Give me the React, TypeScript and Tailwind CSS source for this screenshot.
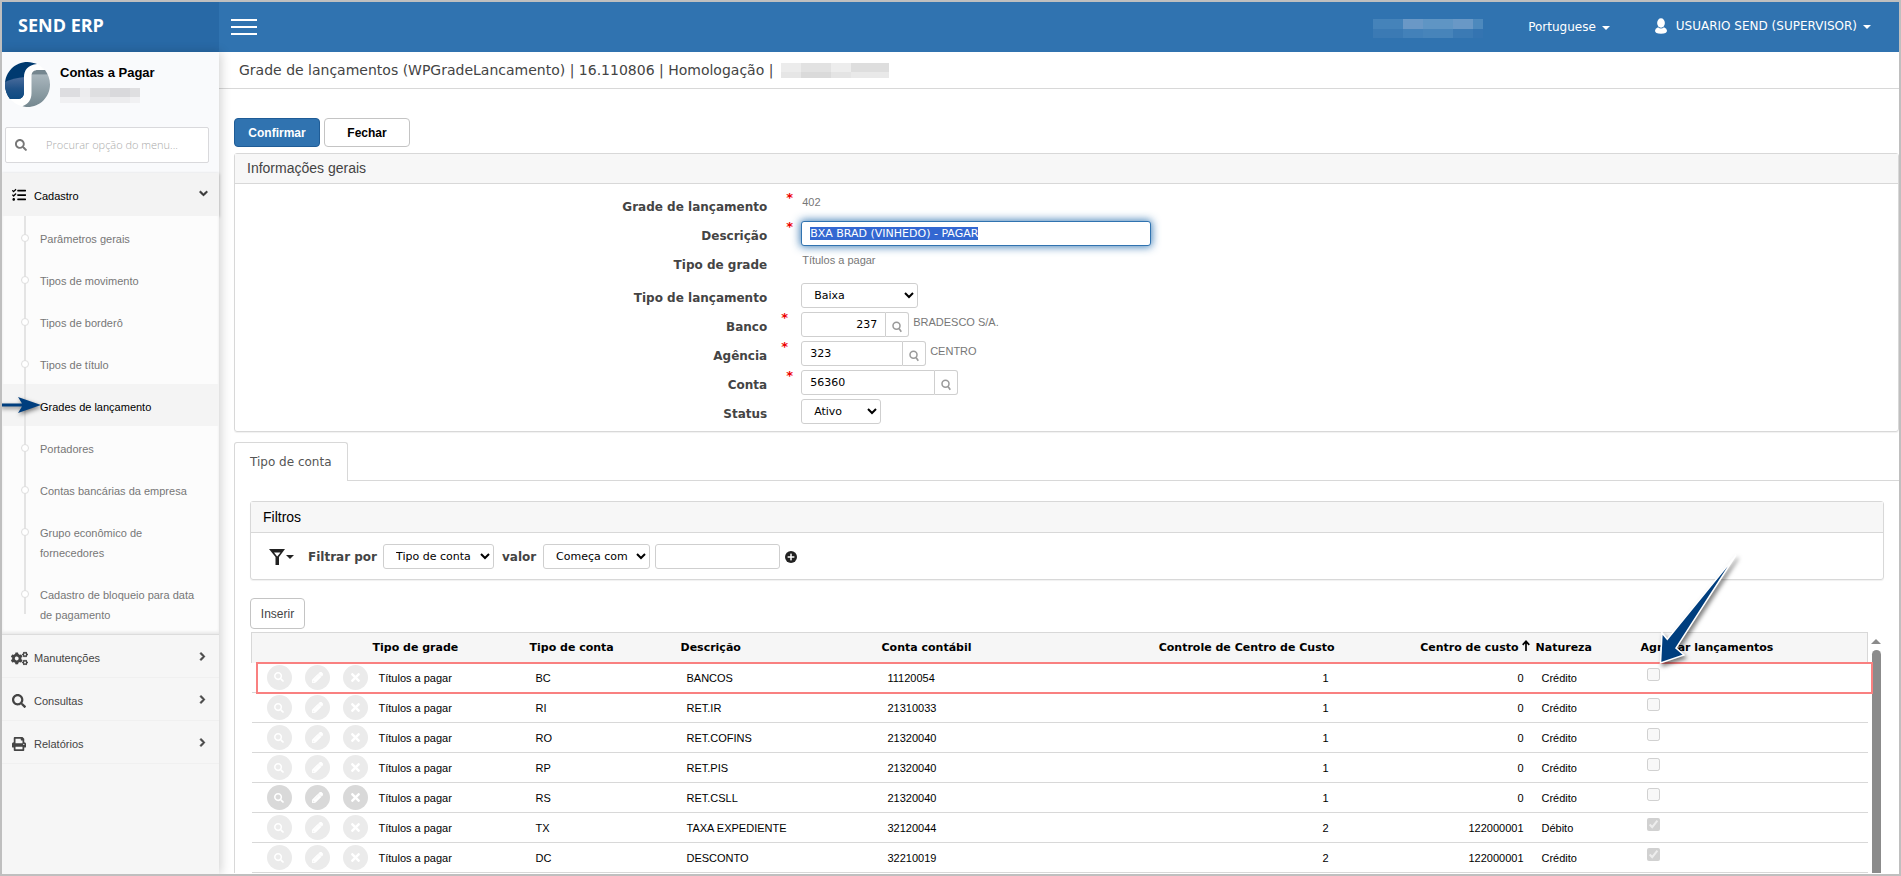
import { FaSearch, FaTasks, FaCogs, FaPrint, FaChevronDown, FaChevronRight, FaPlus, FaTimes, FaPencilAlt } from "react-icons/fa";
import type { ReactNode } from "react";

const VERDANA = "font-['Verdana','DejaVu_Sans',sans-serif]";
const ARIAL = "font-['Liberation_Sans',Arial,sans-serif]";

const submenu = [
  "Parâmetros gerais",
  "Tipos de movimento",
  "Tipos de borderô",
  "Tipos de título",
  "Grades de lançamento",
  "Portadores",
  "Contas bancárias da empresa",
  "Grupo econômico de fornecedores",
  "Cadastro de bloqueio para data de pagamento",
];

type Entry = {
  tipo: string;
  descricao: string;
  conta: string;
  controle: number;
  centro: string;
  natureza: string;
  agregar: boolean;
  enabled?: boolean;
};

const entries: Entry[] = [
  { tipo: "BC", descricao: "BANCOS", conta: "11120054", controle: 1, centro: "0", natureza: "Crédito", agregar: false },
  { tipo: "RI", descricao: "RET.IR", conta: "21310033", controle: 1, centro: "0", natureza: "Crédito", agregar: false },
  { tipo: "RO", descricao: "RET.COFINS", conta: "21320040", controle: 1, centro: "0", natureza: "Crédito", agregar: false },
  { tipo: "RP", descricao: "RET.PIS", conta: "21320040", controle: 1, centro: "0", natureza: "Crédito", agregar: false },
  { tipo: "RS", descricao: "RET.CSLL", conta: "21320040", controle: 1, centro: "0", natureza: "Crédito", agregar: false, enabled: true },
  { tipo: "TX", descricao: "TAXA EXPEDIENTE", conta: "32120044", controle: 2, centro: "122000001", natureza: "Débito", agregar: true },
  { tipo: "DC", descricao: "DESCONTO", conta: "32210019", controle: 2, centro: "122000001", natureza: "Crédito", agregar: true },
];

function Caret({ className }: { className: string }) {
  return (
    <svg viewBox="0 0 8 4" className={`h-1 w-2 ${className}`} aria-hidden="true">
      <path d="M0 0h8L4 4z" fill="currentColor" />
    </svg>
  );
}

function Logo() {
  return (
    <svg viewBox="0 0 45 45" className="size-[45px] shrink-0" aria-hidden="true">
      <defs>
        <linearGradient id="logo-blue" x1="0" y1="0" x2="0" y2="1">
          <stop offset="0" stopColor="#4a6c9c" />
          <stop offset="0.4" stopColor="#1f5288" />
          <stop offset="1" stopColor="#00457e" />
        </linearGradient>
        <linearGradient id="logo-gray" x1="0" y1="0" x2="0" y2="1">
          <stop offset="0" stopColor="#75868f" />
          <stop offset="0.11" stopColor="#75868f" />
          <stop offset="0.13" stopColor="#a9b6bd" />
          <stop offset="1" stopColor="#74878f" />
        </linearGradient>
        <clipPath id="logo-left">
          <path d="M32 2C29 1 26 0 22.500 0C10 0 0 10 0 22.500C0 28.500 2 33 5 37H13C17 37 19 34 19 30V15C19 8 23 3 32 2Z" />
        </clipPath>
      </defs>
      <circle cx="22.500" cy="22.500" r="22.500" fill="#fff" />
      <g clipPath="url(#logo-left)">
        <rect width="45" height="45" fill="#003a70" />
        <path d="M0 20Q8 16 20 15V45H0Z" fill="url(#logo-blue)" />
      </g>
      <path d="M26.500 14C26.500 10 29 8 33 8H40C43 12 45 17 45 22.500C45 35 35 45 22.500 45C20.500 45 19 44.800 17.500 44.300C23 42 26.500 38 26.500 31Z" fill="url(#logo-gray)" />
    </svg>
  );
}

function SidebarLink({ icon, label }: { icon: ReactNode; label: string }) {
  return (
    <li className="border-b border-[#f0f0f0]">
      <a href="#" className="flex h-[42px] items-center pt-1 pr-[12px] pl-[9px] text-[11px] text-[#444]">
        <span className="flex w-[23px] justify-start">{icon}</span>
        <span className="flex-1">{label}</span>
        <FaChevronRight className="mb-1 size-[9px] stroke-[50px]" />
      </a>
    </li>
  );
}

function Sidebar() {
  return (
    <aside className={`relative z-10 flex w-[217px] shrink-0 flex-col bg-[#f6f6f6] shadow-[2px_0_10px_rgba(0,0,0,0.18)] ${ARIAL}`}>
      <div className="bg-[#f9fafc] pb-[10px] pl-[3px]">
        <div className="flex gap-[10px] pt-[10px]">
          <Logo />
          <div className="pt-[3px]">
            <p className="text-[13px] leading-4 font-bold text-black">Contas a Pagar</p>
            <div className="mt-[7px] grid w-20 grid-cols-[20px_10px_20px_20px_10px]">
              <i className="h-[9px] bg-[#dddde0]" /><i className="bg-[#ececee]" /><i className="bg-[#dfdfe1]" /><i className="bg-[#d9d9dc]" /><i className="bg-[#dfdfe1]" />
              <i className="h-1.5 bg-[#f0f0f2]" /><i className="bg-[#eeeef0]" /><i className="bg-[#e9e9eb]" /><i className="bg-[#ececee]" /><i className="bg-[#f1f1f3]" />
            </div>
          </div>
        </div>
        <label className="mt-5 flex h-9 w-[204px] items-center rounded-xs border border-[#d9d9dc] bg-white pl-[9px]">
          <FaSearch className="size-3 text-[#777]" />
          <input
            type="text"
            aria-label="Procurar opção do menu"
            placeholder="Procurar opção do menu..."
            className="ml-[19px] w-[150px] bg-transparent font-['Open_Sans',sans-serif] text-[11px] font-light outline-none placeholder:text-[#aaa]"
          />
        </label>
      </div>
      <nav>
        <a href="#" className="relative flex h-[43px] items-center bg-[#f3f3f3] pt-px pr-[11px] pl-[10px] text-[11px] text-black shadow-[0_1px_3px_rgba(0,0,0,0.25)]">
          <FaTasks className="mr-2 size-[14px]" />
          <span className="flex-1 pt-[3px]">Cadastro</span>
          <FaChevronDown className="mb-1 size-[9px] stroke-[50px] text-[#333]" />
        </a>
        <div className="relative border-b border-[#dcdcdc] bg-[#fcfcfc] shadow-[inset_0_-2px_3px_rgba(0,0,0,0.08)]">
          <ul>
            {submenu.map((label, i) => (
              <li key={label} className={`relative ${i === 4 ? "bg-[#f4f4f4]" : ""}`}>
                <span className={`absolute left-[22px] w-0.5 bg-[#e4e4e4] ${i === 8 ? "top-0 h-[42px]" : "inset-y-0"}`} />
                {i !== 4 && <span className="absolute top-[18px] left-[19px] size-2 rounded-full border border-[#dedede] bg-white" />}
                <a href="#" className={`block pt-[13px] pr-5 pb-[9px] pl-[38px] text-[11px] leading-5 ${i === 4 ? "text-black" : "text-[#777]"}`}>
                  {label}
                </a>
                {i === 4 && (
                  <svg viewBox="0 0 42 24" className="absolute top-[9px] -left-0.5 h-6 w-[42px] drop-shadow-[1px_2px_2px_rgba(0,0,0,0.5)]" aria-hidden="true">
                    <path d="M0 10.500H22L18 4L41 12L18 20L22 13.500H0Z" fill="#003e7e" />
                  </svg>
                )}
              </li>
            ))}
          </ul>
        </div>
        <ul>
          <SidebarLink icon={<FaCogs className="size-[17px]" />} label="Manutenções" />
          <SidebarLink icon={<FaSearch className="ml-px size-[14px]" />} label="Consultas" />
          <SidebarLink icon={<FaPrint className="ml-px size-[14px]" />} label="Relatórios" />
        </ul>
      </nav>
    </aside>
  );
}

function TopBar() {
  return (
    <header className={`flex h-[50px] shrink-0 bg-[#3073b0] text-white ${VERDANA}`}>
      <div className="flex w-[217px] items-center bg-[#2869a6] pb-1 pl-4 font-['Open_Sans',sans-serif] text-lg font-bold">SEND ERP</div>
      <button type="button" aria-label="Menu" className="ml-3 flex w-[26px] flex-col justify-center gap-[5px]">
        <span className="h-0.5 w-full bg-white" />
        <span className="h-0.5 w-full bg-white" />
        <span className="h-0.5 w-full bg-white" />
      </button>
      <div className="ml-auto flex items-center pr-7 pb-0.5 text-xs">
        <div className="mr-[45px] grid grid-cols-[30px_20px_30px_20px_10px] pt-1">
          <i className="h-[10px] bg-[#4583ba]" /><i className="bg-[#6a98c6]" /><i className="bg-[#5f95c4]" /><i className="bg-[#6998c6]" /><i className="bg-[#4d89bd]" />
          <i className="h-[9px] bg-[#3b7ab4]" /><i className="bg-[#4381b9]" /><i className="bg-[#4784ba]" /><i className="bg-[#3b7ab4]" /><i className="bg-[#3474b1]" />
        </div>
        <a href="#" className="flex items-center gap-1.5 pt-0.5">Portuguese <Caret className="mt-0.5 text-white" /></a>
        <a href="#" className="ml-[45px] flex items-center gap-[9px]">
          <svg viewBox="0 0 14 18" className="h-4 w-3" aria-hidden="true">
            <ellipse cx="7" cy="5.500" rx="4.500" ry="5.500" fill="#fff" />
            <path d="M3.500 10.500Q0 12 0 14.500Q0 18 7 18Q14 18 14 14.500Q14 12 10.500 10.500Q7 13.500 3.500 10.500Z" fill="#fff" />
          </svg>
          <span className="flex items-center gap-1.5">USUARIO SEND (SUPERVISOR) <Caret className="mt-0.5 text-white" /></span>
        </a>
      </div>
    </header>
  );
}

const box = "h-[25px] rounded-[3px] border border-[#cfcfcf] bg-white text-[11px] text-black";

function Field({ label, id, required, near, tall, children }: { label: string; id: string; required?: boolean; near?: boolean; tall?: boolean; children: ReactNode }) {
  return (
    <div className={`flex ${tall ? "h-[33px]" : "h-[29px]"}`}>
      <label htmlFor={id} className="w-[32%] pt-[5px] text-right text-xs leading-5 font-bold text-[#444]">{label}</label>
      <span className={`w-[34px] text-right text-[13px] leading-3 font-bold text-[#e00] ${near ? "pr-[13px]" : "pr-2"}`}>{required ? "*" : ""}</span>
      <div className="flex items-start">{children}</div>
    </div>
  );
}

function Lookup({ id, value, width, right, text }: { id: string; value: string; width: string; right?: boolean; text?: string }) {
  return (
    <>
      <input id={id} defaultValue={value} className={`${box} ${width} rounded-r-none px-2 ${right ? "text-right" : ""}`} />
      <button type="button" aria-label="Pesquisar" className="flex h-[25px] w-[23px] items-center justify-center rounded-r-[3px] border border-l-0 border-[#cfcfcf] bg-white pt-1 text-[#999]">
        <svg viewBox="0 0 10 12" className="h-3 w-2.5" fill="none" stroke="currentColor" aria-hidden="true">
          <circle cx="4.500" cy="4.800" r="3.500" strokeWidth="1.500" />
          <path d="M7 7.500L9.300 10.800" strokeWidth="1.600" />
        </svg>
      </button>
      {text && <span className={`pt-[3px] pl-1 text-[11px] leading-[14px] text-[#777] ${ARIAL}`}>{text}</span>}
    </>
  );
}

function GeneralInfo() {
  const readOnly = `pl-px pt-[3px] text-[11px] leading-[14px] text-[#777] ${ARIAL}`;
  return (
    <section className="mt-1.5 rounded-[3px] border border-[#d8d8d8] pb-[3px] shadow-[0_1px_1px_rgba(0,0,0,0.06)]">
      <h2 className={`border-b border-[#d8d8d8] bg-[#f7f7f7] py-1 pl-3 text-sm leading-[21px] text-[#444] ${ARIAL}`}>Informações gerais</h2>
      <form className="pt-2">
        <Field label="Grade de lançamento" id="grade" required><output id="grade" className={readOnly}>402</output></Field>
        <Field label="Descrição" id="descricao" required>
          <input
            id="descricao"
            defaultValue="BXA BRAD (VINHEDO) - PAGAR"
            autoFocus
            onFocus={(e) => e.currentTarget.select()}
            className="h-[25px] w-[350px] rounded-[3px] border border-[#3073b0] bg-white px-2 text-[11px] text-black shadow-[0_0_8px_1px_rgba(48,115,176,0.9)] outline-none selection:bg-[#3367d1] selection:text-white"
          />
        </Field>
        <Field label="Tipo de grade" id="tipo-grade" tall><output id="tipo-grade" className={readOnly}>Títulos a pagar</output></Field>
        <Field label="Tipo de lançamento" id="tipo-lancamento">
          <select id="tipo-lancamento" className={`${box} w-[117px] pl-2`}><option>Baixa</option></select>
        </Field>
        <Field label="Banco" id="banco" required near><Lookup id="banco" value="237" width="w-[85px]" right text="BRADESCO S/A." /></Field>
        <Field label="Agência" id="agencia" required near><Lookup id="agencia" value="323" width="w-[102px]" text="CENTRO" /></Field>
        <Field label="Conta" id="conta" required><Lookup id="conta" value="56360" width="w-[134px]" /></Field>
        <Field label="Status" id="status">
          <select id="status" className={`${box} w-20 pl-2`}><option>Ativo</option></select>
        </Field>
      </form>
    </section>
  );
}

function Filters() {
  return (
    <section className="mr-[15px] rounded-[3px] border border-[#d8d8d8] shadow-[0_1px_1px_rgba(0,0,0,0.06)]">
      <h2 className={`border-b border-[#d8d8d8] bg-[#f7f7f7] py-1 pl-3 text-sm leading-[22px] text-black ${ARIAL}`}>Filtros</h2>
      <form className="flex h-[46px] items-center pt-px pl-[18px] text-xs text-[#444]">
        <button type="button" aria-label="Filtros salvos" className="flex items-center text-[#222]">
          <svg viewBox="0 0 16 16" className="size-4" aria-hidden="true">
            <path fillRule="evenodd" d="M0 0H16L10 8V16H6.500V8ZM5 3.500L8.200 7.500L11.500 3.500Z" fill="currentColor" />
          </svg>
          <Caret className="ml-px" />
        </button>
        <label htmlFor="campo" className="ml-[14px] w-[75px] font-bold whitespace-nowrap">Filtrar por</label>
        <select id="campo" className={`${box} w-[111px] pl-2`}><option>Tipo de conta</option></select>
        <label htmlFor="operador" className="ml-2 w-[41px] font-bold">valor</label>
        <select id="operador" className={`${box} w-[107px] pl-2`}><option>Começa com</option></select>
        <input aria-label="Valor" className={`${box} ml-[5px] w-[125px] px-2`} />
        <button type="button" aria-label="Adicionar filtro" className="ml-[5px] flex size-3 items-center justify-center rounded-full bg-[#222] text-white">
          <FaPlus className="size-2" />
        </button>
      </form>
    </section>
  );
}

function RowActions({ enabled }: { enabled?: boolean }) {
  const c = `flex size-[25px] items-center justify-center rounded-full text-white ${enabled ? "bg-[#d9d9d9]" : "bg-[#ebebeb]"}`;
  return (
    <div className="flex gap-[13px] pl-[15px]">
      <button type="button" aria-label="Visualizar" className={c}><FaSearch className="size-[10px]" /></button>
      <button type="button" aria-label="Editar" className={c}><FaPencilAlt className="size-[11px] stroke-[40px]" /></button>
      <button type="button" aria-label="Excluir" className={c}><FaTimes className="size-[13px]" /></button>
    </div>
  );
}

function EntriesTable() {
  return (
    <div className="relative mt-[3px] mr-[15px] ml-px flex">
      <table className={`w-full flex-1 table-fixed border-collapse text-left text-[11px] text-black ${ARIAL}`}>
        <colgroup>
          <col className="w-[118px]" /><col className="w-[157px]" /><col className="w-[151px]" /><col className="w-[201px]" />
          <col className="w-[200px]" /><col /><col className="w-[195px]" /><col className="w-[105px]" /><col className="w-[230px]" />
        </colgroup>
        <thead className={`border border-b-0 border-[#d8d8d8] bg-[#f6f6f6] whitespace-nowrap ${VERDANA}`}>
          <tr className="h-[30px]">
            <th aria-label="Ações" />
            <th className="px-[3px]">Tipo de grade</th>
            <th className="px-[3px]">Tipo de conta</th>
            <th className="px-[3px]">Descrição</th>
            <th className="px-[3px]">Conta contábil</th>
            <th className="px-[3px] text-right">Controle de Centro de Custo</th>
            <th className="px-[3px] text-right">
              Centro de custo
              <svg viewBox="0 0 8 11" className="ml-[3px] inline-block h-[11px] w-2 align-[0px]" fill="none" stroke="currentColor" strokeWidth="1.700" aria-hidden="true">
                <path d="M4 11V1.500M.7 4.800L4 1.300L7.300 4.800" />
              </svg>
            </th>
            <th className="px-[3px]">Natureza</th>
            <th className="px-[3px]">Agregar lançamentos</th>
          </tr>
        </thead>
        <tbody>
          {entries.map((e) => (
            <tr key={e.tipo} className="h-[30px] border-b border-[#d8d8d8]">
              <td><RowActions enabled={e.enabled} /></td>
              <td className="px-[9px] pt-0.5">Títulos a pagar</td>
              <td className="px-[9px] pt-0.5">{e.tipo}</td>
              <td className="px-[9px] pt-0.5">{e.descricao}</td>
              <td className="px-[9px] pt-0.5">{e.conta}</td>
              <td className="px-[9px] pt-0.5 text-right">{e.controle}</td>
              <td className="px-[9px] pt-0.5 text-right">{e.centro}</td>
              <td className="px-[9px] pt-0.5">{e.natureza}</td>
              <td className="px-[9px] pb-1.5">
                <input type="checkbox" aria-label="Agregar lançamentos" disabled defaultChecked={e.agregar} className="block size-[13px]" />
              </td>
            </tr>
          ))}
        </tbody>
      </table>
      <div className="flex w-4 shrink-0 flex-col items-center pt-[7px]" aria-hidden="true">
        <svg viewBox="0 0 10 5" className="h-[5px] w-2.5"><path d="M5 0L10 5H0Z" fill="#8b8b8b" /></svg>
        <div className="mt-1.5 w-[9px] flex-1 rounded-t-full bg-[#8b8b8b]" />
      </div>
      <div className="pointer-events-none absolute top-[30px] right-[11px] left-[5px] h-8 border-2 border-[#f98080]" />
      <svg viewBox="0 0 90 120" className="pointer-events-none absolute -top-[80px] right-[136px] h-[120px] w-[90px] drop-shadow-[2px_3px_2px_rgba(0,0,0,0.5)]" aria-hidden="true">
        <path d="M78 3L9.300 87.300L4 81L2.500 111L26 103L18 96Z" fill="#003e7e" stroke="#fff" strokeWidth="1.500" />
      </svg>
    </div>
  );
}

export default function App() {
  return (
    <div className={`flex h-screen flex-col overflow-hidden border-2 border-[#bfbfbf] bg-white ${VERDANA}`}>
      <TopBar />
      <div className="flex min-h-0 flex-1">
        <Sidebar />
        <main className="min-w-0 flex-1 overflow-hidden">
          <div className="flex h-[37px] items-center border-b border-[#d8d8d8] pl-5 text-sm text-[#444]">
            <h1>Grade de lançamentos (WPGradeLancamento) | 16.110806 | Homologação |</h1>
            <div className="ml-2 grid grid-cols-[20px_30px_20px_38px]">
              <i className="h-[9px] bg-[#ececec]" /><i className="bg-[#e2e2e2]" /><i className="bg-[#ededed]" /><i className="bg-[#dedede]" />
              <i className="h-[6px] bg-[#e6e6e6]" /><i className="bg-[#dadada]" /><i className="bg-[#e4e4e4]" /><i className="bg-[#e9e9e9]" />
            </div>
          </div>
          <div className="pt-[29px] pl-[15px]">
            <div className={`flex gap-1 text-xs font-bold ${ARIAL}`}>
              <button type="button" className="h-[29px] w-[86px] rounded-[4px] border border-[#1f5c96] bg-[#3073b0] text-white">Confirmar</button>
              <button type="button" className="h-[29px] w-[86px] rounded-[4px] border border-[#c4c4c4] bg-white text-black">Fechar</button>
            </div>
            <GeneralInfo />
            <div className="mt-2.5 flex" role="tablist">
              <button type="button" role="tab" aria-selected="true" className="h-[39px] rounded-t-[3px] border border-b-0 border-[#d8d8d8] px-[15px] text-xs text-[#555]">Tipo de conta</button>
              <div className="flex-1 border-b border-[#d8d8d8]" />
            </div>
            <div className="border-l border-[#d8d8d8] pt-5 pl-[15px]">
              <Filters />
              <button type="button" className={`mt-[18px] h-[31px] w-[55px] rounded-[4px] border border-[#c4c4c4] bg-white text-xs text-[#444] ${ARIAL}`}>Inserir</button>
              <EntriesTable />
            </div>
          </div>
        </main>
      </div>
    </div>
  );
}
